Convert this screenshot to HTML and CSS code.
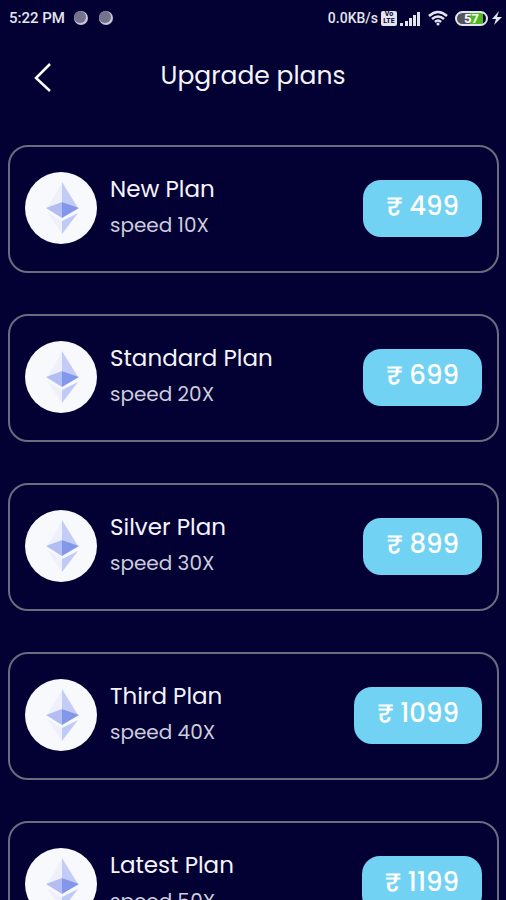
FILE: index.html
```html
<!DOCTYPE html>
<html lang="en">
<head>
<meta charset="utf-8">
<meta name="viewport" content="width=device-width, initial-scale=1">
<title>Upgrade plans</title>
<link rel="stylesheet" href="styles.css">
</head>
<body>
<svg class="defs" aria-hidden="true">
  <symbol id="eth" viewBox="0 0 72 72">
    <path fill="#eef1fc" d="M37 11v19L22 36z"/>
    <path fill="#c3ccf6" d="M37 10v20l16 6z"/>
    <path fill="#b1bdf3" d="M37 30v16L21 36z"/>
    <path fill="#8397ea" d="M37 30v16l17-10z"/>
    <path fill="#eef1fc" d="M37 49v13L22 40z"/>
    <path fill="#c0caf6" d="M37 49v13l16-21z"/>
  </symbol>
</svg>
<div class="status">
  <span class="time">5:22 PM</span>
  <svg class="dots" width="42" height="16" viewBox="0 0 42 16" aria-hidden="true">
    <circle cx="8" cy="8" r="7" fill="#c4c4d2"/><circle cx="7" cy="7" r="6" fill="#74728f"/>
    <circle cx="33" cy="8" r="7" fill="#c4c4d2"/><circle cx="32" cy="7" r="6" fill="#74728f"/>
  </svg>
  <span class="rate">0.0KB/s</span>
  <span class="volte"><span>Vo</span><span>LTE</span></span>
  <svg class="signal" width="21" height="15" viewBox="0 0 21 15" fill="#e4e4ee" aria-hidden="true">
    <path d="M0 12h3v3H0zM5 10h3v5H5zM9 7h3v8H9zM13 4h3v11h-3zM17 1h3v14h-3z"/>
  </svg>
  <svg class="wifi" width="20" height="16" viewBox="0 0 20 16" fill="none" stroke="#e4e4ee" stroke-width="2.5" aria-hidden="true">
    <path d="M1 6q9-8 18 0M4 9q6-5 12 0M7 12q3-3 6 0"/><circle cx="10" cy="14" r="1.5" fill="#e4e4ee" stroke="none"/>
  </svg>
  <span class="battery">57</span>
  <svg class="bolt" width="10" height="16" viewBox="0 0 10 16" fill="#e4e4ee" aria-hidden="true"><path d="M7 1L0 9h4l-2 6 8-8H5z"/></svg>
</div>
<header class="header">
  <button class="back" type="button" aria-label="Back">
    <svg width="18" height="30" viewBox="0 0 18 30" fill="none" stroke="#fff" stroke-width="2.5"><path d="M16 2L2 16l14 13"/></svg>
  </button>
  <h1>Upgrade plans</h1>
</header>
<main class="plans">
  <article class="card">
    <svg class="coin" aria-hidden="true"><use href="#eth"/></svg>
    <div class="info"><h2>New Plan</h2><p>speed 10X</p></div>
    <button class="price" type="button">₹ 499</button>
  </article>
  <article class="card">
    <svg class="coin" aria-hidden="true"><use href="#eth"/></svg>
    <div class="info"><h2>Standard Plan</h2><p>speed 20X</p></div>
    <button class="price" type="button">₹ 699</button>
  </article>
  <article class="card">
    <svg class="coin" aria-hidden="true"><use href="#eth"/></svg>
    <div class="info"><h2>Silver Plan</h2><p>speed 30X</p></div>
    <button class="price" type="button">₹ 899</button>
  </article>
  <article class="card">
    <svg class="coin" aria-hidden="true"><use href="#eth"/></svg>
    <div class="info"><h2>Third Plan</h2><p>speed 40X</p></div>
    <button class="price" type="button">₹ 1099</button>
  </article>
  <article class="card">
    <svg class="coin" aria-hidden="true"><use href="#eth"/></svg>
    <div class="info"><h2>Latest Plan</h2><p>speed 50X</p></div>
    <button class="price" type="button">₹ 1199</button>
  </article>
</main>
</body>
</html>
```
FILE: styles.css
```css
* { box-sizing: border-box; }
html { scrollbar-width: none; }
body {
  margin: 0;
  background: #030034;
  color: #f4f4fa;
  font-family: Poppins, Inter, "Noto Sans", sans-serif;
}
h1, h2, p { margin: 0; font-weight: 400; }
button { border: 0; font: inherit; color: inherit; cursor: pointer; }
.defs { display: none; }

.status {
  display: flex;
  align-items: center;
  height: 36px;
  padding: 0 4px 0 9px;
  font-family: Roboto, sans-serif;
  font-size: 15px;
  font-weight: 500;
  color: #e4e4ee;
}
.dots { margin-left: 8px; }
.rate { margin-left: auto; font-size: 14px; }
.volte {
  display: flex;
  flex-direction: column;
  width: 16px;
  height: 15px;
  margin: 0 3px;
  border-radius: 2px;
  background: #e4e4ee;
  color: #030034;
  font-size: 7px;
  font-weight: 700;
  line-height: 7px;
  text-align: center;
}
.wifi { margin: 0 7px; }
.battery {
  width: 33px;
  height: 15px;
  border: 2px solid #e4e4ee;
  border-radius: 8px;
  background: linear-gradient(90deg, #55555f 45%, #4dbb20 45% 88%, #030034 88%);
  color: #fff;
  font-size: 13px;
  font-weight: 700;
  line-height: 11px;
  text-align: center;
}
.bolt { margin-left: 4px; }

.header {
  display: grid;
  grid-template-columns: 48px 1fr 48px;
  align-items: center;
  height: 80px;
  padding: 0 19px;
}
.back { display: grid; place-items: center; height: 48px; padding: 2px 0 0; background: none; }
h1 { font-size: 25px; line-height: 36px; text-align: center; }

.plans { display: grid; gap: 41px; padding: 29px 7px 41px 8px; }
.card {
  display: flex;
  align-items: center;
  gap: 13px;
  height: 128px;
  padding: 0 15px 2px;
  border: 2px solid #6c6b7e;
  border-radius: 20px;
}
.coin { flex: none; width: 72px; height: 72px; border-radius: 50%; background: #f7f9fd; }
.info { flex: 1; padding-bottom: 2px; }
h2 { font-size: 23px; line-height: 36px; }
.info p { font-size: 20px; line-height: 36px; color: #cdcddc; }
.price {
  height: 57px;
  padding: 0 23px 4px;
  border-radius: 18px;
  background: #71d2f3;
  color: #fff;
  font-size: 26px;
  font-weight: 500;
}
```
